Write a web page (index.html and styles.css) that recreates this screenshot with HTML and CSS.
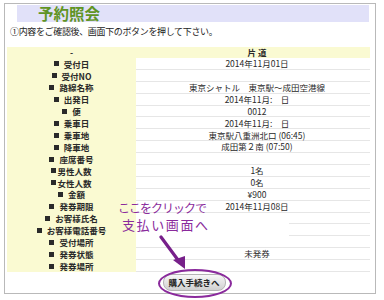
FILE: index.html
```html
<!DOCTYPE html>
<html lang="ja">
<head>
<meta charset="utf-8">
<title>予約照会</title>
<link rel="stylesheet" href="styles.css">
</head>
<body>
<div class="panel">
  <div class="title-band"><h1 class="title">予約照会</h1></div>
  <p class="note">①内容をご確認後、画面下のボタンを押して下さい。</p>
  <div class="table">
    <div class="label head">-</div><div class="value head">片 道</div>
    <div class="label"><span class="b"></span>受付日</div><div class="value">2014年11月01日</div>
    <div class="label"><span class="b"></span>受付NO</div><div class="value"></div>
    <div class="label"><span class="b"></span>路線名称</div><div class="value">東京シャトル　東京駅～成田空港線</div>
    <div class="label"><span class="b"></span>出発日</div><div class="value">2014年11月:　日</div>
    <div class="label"><span class="b"></span>便</div><div class="value">0012</div>
    <div class="label"><span class="b"></span>乗車日</div><div class="value">2014年11月:　日</div>
    <div class="label"><span class="b"></span>乗車地</div><div class="value">東京駅八重洲北口 (06:45)</div>
    <div class="label"><span class="b"></span>降車地</div><div class="value">成田第２南 (07:50)</div>
    <div class="label"><span class="b"></span>座席番号</div><div class="value"></div>
    <div class="label"><span class="b tight"></span>男性人数</div><div class="value">1名</div>
    <div class="label"><span class="b tight"></span>女性人数</div><div class="value">0名</div>
    <div class="label"><span class="b"></span>金額</div><div class="value">¥900</div>
    <div class="label"><span class="b"></span>発券期限</div><div class="value">2014年11月08日</div>
    <div class="label"><span class="b"></span>お客様氏名</div><div class="value"></div>
    <div class="label"><span class="b"></span>お客様電話番号</div><div class="value"></div>
    <div class="label"><span class="b"></span>受付場所</div><div class="value"></div>
    <div class="label"><span class="b"></span>発券状態</div><div class="value">未発券</div>
    <div class="label"><span class="b"></span>発券場所</div><div class="value"></div>
  </div>
  <div class="actions"><button class="buy" type="button">購入手続きへ</button></div>
</div>

<div class="callout-bg"></div>
<div class="callout">
  <div class="c1">ここをクリックで</div>
  <div class="c2">支払い画面へ</div>
</div>
<svg class="arrow" width="40" height="40" viewBox="0 0 40 40">
  <line x1="3" y1="2" x2="20" y2="25" stroke="#77208a" stroke-width="3.2" stroke-linecap="round"/>
  <polygon points="15,25 27,21 27,34" fill="#77208a"/>
</svg>
<div class="ring"></div>
</body>
</html>
```

FILE: styles.css
```css
* { box-sizing: border-box; }

html, body {
  margin: 0;
  padding: 0;
  background: #ffffff;
}

body {
  position: relative;
  width: 384px;
  height: 300px;
  overflow: hidden;
  font-family: "Noto Sans CJK JP", "Noto Sans", sans-serif;
  color: #2a2a2a;
}

.panel {
  margin: 3px 0 0 4px;
  width: 372px;
  height: 291px;
  border: 1px solid #b9b9b9;
  display: flex;
  flex-direction: column;
}

.title-band {
  margin: 1px 6px 0 12px;
  height: 17px;
  background: #e1e1f9;
  padding-left: 21px;
}

.title {
  margin: 0;
  font-size: 15.5px;
  line-height: 17px;
  font-weight: bold;
  color: #5f9424;
  letter-spacing: 0;
}

.note {
  margin: 4px 0 0 5px;
  font-size: 9px;
  line-height: 12px;
  letter-spacing: -0.35px;
  color: #222;
}

.table {
  margin: 9px 0 0 2px;
  width: 363px;
  display: grid;
  grid-template-columns: 129px 234px;
  grid-template-rows: 11px repeat(18, 11.9px);
  font-size: 8.5px;
}

.label {
  background: #fafad2;
  display: flex;
  align-items: center;
  justify-content: center;
  font-weight: bold;
  color: #2a2a2a;
  white-space: nowrap;
  line-height: 1;
}

.value {
  display: flex;
  align-items: center;
  justify-content: center;
  padding-left: 8px;
  border-bottom: 1px solid #e6e6e6;
  color: #2a2a2a;
  white-space: nowrap;
  line-height: 1;
}

.value.head {
  background: #fafad2;
  border-bottom: none;
  font-weight: bold;
}

.b {
  display: inline-block;
  width: 5px;
  height: 5px;
  background: #2a2a2a;
  margin-right: 5px;
}

.b.tight {
  margin-right: 1px;
}

.actions {
  display: flex;
  justify-content: center;
  padding-left: 8px;
  margin-top: 2px;
}

.buy {
  width: 63px;
  height: 17px;
  padding: 0;
  border: 1px solid #b4b4b4;
  border-radius: 8px;
  background: linear-gradient(#f7f7f7, #d0d0d0);
  font-family: "Noto Sans CJK JP", sans-serif;
  font-size: 8.5px;
  font-weight: bold;
  color: #222;
  line-height: 15px;
}

.callout-bg {
  position: absolute;
  left: 136px;
  top: 214px;
  width: 153px;
  height: 26px;
  background: #ffffff;
}

.callout {
  position: absolute;
  left: 118px;
  top: 200px;
  color: #8a2a9c;
  line-height: 1;
  white-space: nowrap;
}

.c1 {
  font-size: 12px;
  letter-spacing: -1px;
  height: 16px;
  line-height: 16px;
}

.c2 {
  font-size: 13px;
  letter-spacing: 1.6px;
  padding-left: 4px;
  height: 17px;
  line-height: 17px;
}

.arrow {
  position: absolute;
  left: 158px;
  top: 235px;
}

.ring {
  position: absolute;
  left: 158px;
  top: 269px;
  width: 74px;
  height: 29px;
  border: 2px solid #8a2a9c;
  border-radius: 50%;
}
```
